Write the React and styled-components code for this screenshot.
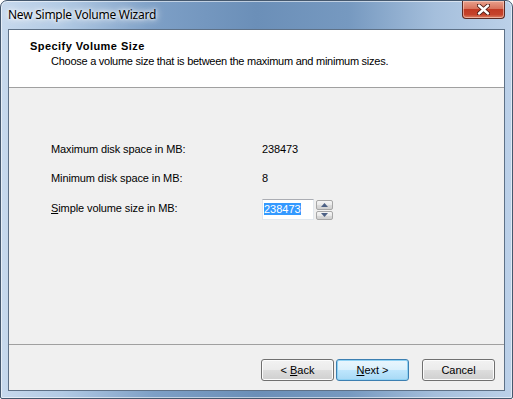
import React from "react";
import styled, { createGlobalStyle } from "styled-components";

const Global = createGlobalStyle`
  html, body { margin: 0; padding: 0; background: #ffffff; }
  body { font-family: "Liberation Sans", Arial, sans-serif; }
`;

const Window = styled.div`
  box-sizing: border-box;
  width: 513px;
  height: 399px;
  display: flex;
  flex-direction: column;
  border: 1px solid #45586e;
  border-radius: 7px 7px 2px 2px;
  background: linear-gradient(
    to right,
    #c7d9ed 0%,
    #b2cae4 12%,
    #7d9fc6 30%,
    #6b8fb8 50%,
    #7699c0 68%,
    #a5bfdc 85%,
    #bcd1e9 100%
  );
  box-shadow: inset 0 0 0 1px rgba(255, 255, 255, 0.55);
  overflow: hidden;
`;

const TitleBar = styled.div`
  height: 28px;
  display: flex;
  align-items: flex-start;
  justify-content: space-between;
  padding-left: 7px;
  padding-right: 7px;
`;

const Title = styled.div`
  font-family: "Noto Sans", "Open Sans", sans-serif;
  font-size: 12px;
  letter-spacing: -0.25px;
  line-height: 16px;
  margin-top: 6px;
  color: #000;
  text-shadow: 0 0 6px #ffffff, 0 0 10px #ffffff, 0 0 3px #ffffff;
`;

const CloseButton = styled.div`
  width: 43px;
  height: 18px;
  box-sizing: border-box;
  border: 1px solid #5b2a24;
  border-top: none;
  border-radius: 0 0 4px 4px;
  background: linear-gradient(
    to bottom,
    #e8a08c 0%,
    #d8735d 45%,
    #c13a24 50%,
    #c5432c 80%,
    #dc8266 100%
  );
  box-shadow: inset 0 0 0 1px rgba(255, 220, 210, 0.55);
  display: flex;
  align-items: center;
  justify-content: center;
`;

const Client = styled.div`
  flex: 1;
  margin: 0 7px 7px 7px;
  border: 1px solid #5e7187;
  background: #f0f0f0;
  display: flex;
  flex-direction: column;
`;

const Header = styled.div`
  height: 58px;
  background: #ffffff;
  border-bottom: 1px solid #a0a0a0;
  box-sizing: border-box;
  padding: 10px 0 0 21px;
  font-size: 11px;
  line-height: 13px;
  color: #000;
`;

const HeaderTitle = styled.div`
  font-weight: bold;
  letter-spacing: 0.45px;
`;

const HeaderSub = styled.div`
  margin-top: 2px;
  padding-left: 21px;
  letter-spacing: -0.26px;
`;

const Body = styled.div`
  flex: 1;
  padding: 51px 0 0 42px;
  display: flex;
  flex-direction: column;
  gap: 8px;
  font-size: 11px;
  color: #000;
`;

const Row = styled.div`
  display: grid;
  grid-template-columns: 211px auto;
  align-items: center;
  height: ${(p) => p.$h || 21}px;
`;

const Label = styled.span`
  line-height: 13px;
  letter-spacing: -0.1px;
`;

const SpinBox = styled.div`
  display: flex;
  align-items: stretch;
  height: 21px;
  margin-top: 2px;
`;

const Field = styled.div`
  box-sizing: border-box;
  width: 52px;
  height: 21px;
  border: 1px solid #e3e9ef;
  border-top-color: #abadb3;
  border-left-color: #e2e3ea;
  background: #fff;
  padding: 3px 0 0 1px;
  line-height: 13px;
`;

const Selected = styled.span`
  background: #3399ff;
  color: #ffffff;
`;

const SpinButtons = styled.div`
  margin-left: 2px;
  width: 17px;
  display: flex;
  flex-direction: column;
  gap: 1px;
  padding-top: 1px;
`;

const SpinButton = styled.div`
  flex: 1;
  box-sizing: border-box;
  border: 1px solid #a7a7a7;
  border-radius: 2px;
  background: linear-gradient(to bottom, #f5f5f5 0%, #e9e9e9 50%, #dcdcdc 51%, #d0d0d0 100%);
  display: flex;
  align-items: center;
  justify-content: center;
`;

const Footer = styled.div`
  height: 46px;
  box-sizing: border-box;
  border-top: 1px solid #a0a0a0;
  display: flex;
  justify-content: flex-end;
  align-items: flex-start;
  padding: 14px 9px 0 0;
`;

const Button = styled.button`
  box-sizing: border-box;
  width: 73px;
  height: 22px;
  margin-left: ${(p) => p.$gap || 0}px;
  padding: 0;
  font-family: "Liberation Sans", Arial, sans-serif;
  font-size: 11px;
  color: #000;
  border-radius: 3px;
  border: 1px solid ${(p) => (p.$default ? "#3c7fb1" : "#707070")};
  background: ${(p) =>
    p.$default
      ? "linear-gradient(to bottom, #eaf6fd 0%, #d9f0fc 50%, #bee6fd 51%, #a7d9f5 100%)"
      : "linear-gradient(to bottom, #f2f2f2 0%, #ebebeb 50%, #dddddd 51%, #cfcfcf 100%)"};
  box-shadow: inset 0 0 0 1px ${(p) => (p.$default ? "#8fd2f4" : "#fcfcfc")};
  u { text-decoration: underline; }
`;

const Arrow = ({ up }) => (
  <svg width="7" height="4" viewBox="0 0 7 4">
    <path d={up ? "M0 4 L3.5 0 L7 4 Z" : "M0 0 L3.5 4 L7 0 Z"} fill="#4d6185" />
  </svg>
);

export default function App() {
  return (
    <>
      <Global />
      <Window>
        <TitleBar>
          <Title>New Simple Volume Wizard</Title>
          <CloseButton>
            <svg width="13" height="11" viewBox="0 0 13 11">
              <path
                d="M2 1.5 L11 9.5 M11 1.5 L2 9.5"
                stroke="#4a1a14"
                strokeWidth="4.2"
                strokeLinecap="round"
              />
              <path
                d="M2 1.5 L11 9.5 M11 1.5 L2 9.5"
                stroke="#ffffff"
                strokeWidth="2.4"
                strokeLinecap="round"
              />
            </svg>
          </CloseButton>
        </TitleBar>
        <Client>
          <Header>
            <HeaderTitle>Specify Volume Size</HeaderTitle>
            <HeaderSub>Choose a volume size that is between the maximum and minimum sizes.</HeaderSub>
          </Header>
          <Body>
            <Row>
              <Label>Maximum disk space in MB:</Label>
              <Label>238473</Label>
            </Row>
            <Row>
              <Label>Minimum disk space in MB:</Label>
              <Label>8</Label>
            </Row>
            <Row $h={23}>
              <Label>
                <u>S</u>imple volume size in MB:
              </Label>
              <SpinBox>
                <Field>
                  <Selected>238473</Selected>
                </Field>
                <SpinButtons>
                  <SpinButton>
                    <Arrow up />
                  </SpinButton>
                  <SpinButton>
                    <Arrow />
                  </SpinButton>
                </SpinButtons>
              </SpinBox>
            </Row>
          </Body>
          <Footer>
            <Button>
              &lt; <u>B</u>ack
            </Button>
            <Button $default $gap={2}>
              <u>N</u>ext &gt;
            </Button>
            <Button $gap={13}>Cancel</Button>
          </Footer>
        </Client>
      </Window>
    </>
  );
}
